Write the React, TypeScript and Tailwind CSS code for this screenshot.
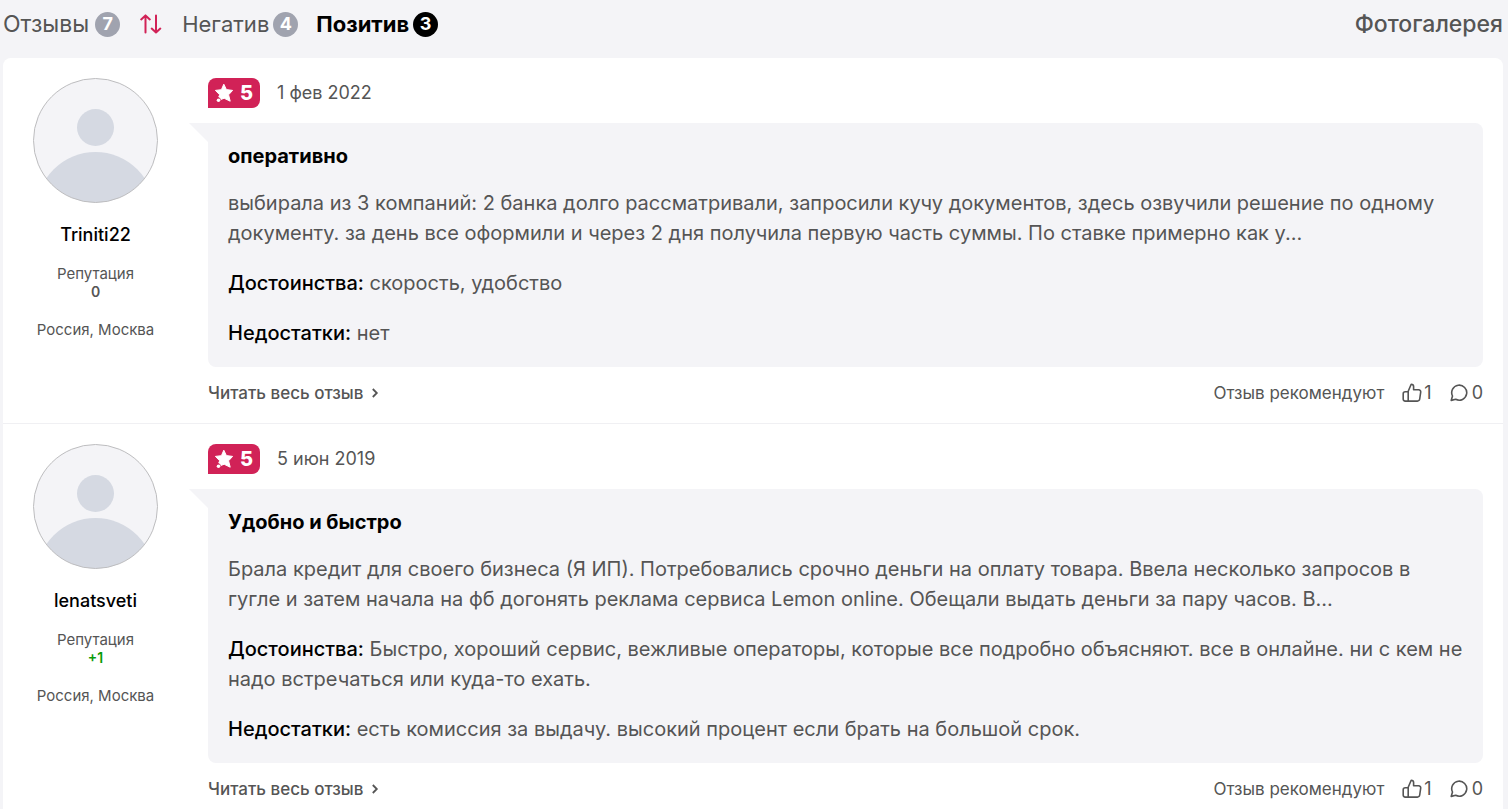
import { ReactNode } from "react";

type Review = {
  author: string;
  reputation: string;
  reputationClass: string;
  place: string;
  rating: number;
  date: string;
  title: string;
  text: ReactNode;
  pros: string;
  cons: string;
  likes: number;
  comments: number;
};

const reviews: Review[] = [
  {
    author: "Triniti22",
    reputation: "0",
    reputationClass: "text-[#555555]",
    place: "Россия, Москва",
    rating: 5,
    date: "1 фев 2022",
    title: "оперативно",
    text: (
      <>
        выбирала из 3 компаний: 2 банка долго рассматривали, запросили кучу документов, здесь озвучили решение по одному
        <br />
        документу. за день все оформили и через 2 дня получила первую часть суммы. По ставке примерно как у...
      </>
    ),
    pros: "скорость, удобство",
    cons: "нет",
    likes: 1,
    comments: 0,
  },
  {
    author: "lenatsveti",
    reputation: "+1",
    reputationClass: "text-[#0a9b0a]",
    place: "Россия, Москва",
    rating: 5,
    date: "5 июн 2019",
    title: "Удобно и быстро",
    text: (
      <>
        Брала кредит для своего бизнеса (Я ИП). Потребовались срочно деньги на оплату товара. Ввела несколько запросов в
        <br />
        гугле и затем начала на фб догонять реклама сервиса Lemon online. Обещали выдать деньги за пару часов. В...
      </>
    ),
    pros: "Быстро, хороший сервис, вежливые операторы, которые все подробно объясняют. все в онлайне. ни с кем не надо встречаться или куда-то ехать.",
    cons: "есть комиссия за выдачу. высокий процент если брать на большой срок.",
    likes: 1,
    comments: 0,
  },
];

function SortIcon() {
  return (
    <svg width="22" height="20" viewBox="0 0 22 20" fill="none" stroke="#d12257" strokeWidth="2" strokeLinecap="round" strokeLinejoin="round" aria-hidden="true">
      <path d="M5.5 18.5V1.5M1.2 5.4l4.3-4 4.3 4M16 1.5v17M11.7 14.6l4.3 4 4.3-4" />
    </svg>
  );
}

function StarIcon() {
  return (
    <svg width="20" height="20" viewBox="0 0 20 20" aria-hidden="true">
      <path
        fill="#fff"
        stroke="#fff"
        strokeWidth="1"
        strokeLinejoin="round"
        d="M9.8 1.2 12.4 6.6 18.6 7.4 14.6 11.8 16.2 18.2 10.2 15.3 6.9 16.4 4.7 14 5.7 11.8 1.4 7.4 7.4 6.7Z"
      />
      <circle cx="4.5" cy="17.3" r="1.8" fill="#fff" />
      <path d="M3.9 14.2 6.5 15.9" stroke="#d12257" strokeWidth="0.8" />
    </svg>
  );
}

function Avatar() {
  return (
    <svg width="125" height="125" viewBox="0 0 125 125" role="img" aria-label="Аватар">
      <defs>
        <clipPath id="avatar-circle">
          <circle cx="62.5" cy="62.5" r="62" />
        </clipPath>
      </defs>
      <circle cx="62.5" cy="62.5" r="62" fill="#f4f4f7" />
      <g clipPath="url(#avatar-circle)" fill="#d5d9e2">
        <circle cx="62.5" cy="49.5" r="18.5" />
        <circle cx="62.5" cy="133" r="59" />
      </g>
      <circle cx="62.5" cy="62.5" r="62" fill="none" stroke="#bdbdbf" strokeWidth="1" />
    </svg>
  );
}

function ThumbIcon() {
  return (
    <svg width="20" height="20" viewBox="0 0 20 20" fill="none" stroke="#555" strokeWidth="1.6" strokeLinejoin="round" strokeLinecap="round" aria-hidden="true">
      <path d="M6.2 8.2 9.2 1.2c1.5 0 2.4.9 2.4 2.4v3.2h5c1.4 0 2.3 1.1 2.1 2.4l-1 6.8c-.2 1.3-1 2.1-2.3 2.1H6.2Z" />
      <path d="M6.2 8.8H3.3c-1.3 0-2.1.8-2.1 2v5.3c0 1.2.8 2 2.1 2h2.9" />
    </svg>
  );
}

function CommentIcon() {
  return (
    <svg width="18" height="18" viewBox="0 0 18 18" fill="none" stroke="#555" strokeWidth="1.6" strokeLinejoin="round" strokeLinecap="round" aria-hidden="true">
      <path d="M1.2 16.4 2.5 12a7.5 7.5 0 1 1 3.2 3.3Z" />
    </svg>
  );
}

function Counter({ value, active }: { value: number; active?: boolean }) {
  return (
    <span
      className={`flex size-[25px] items-center justify-center rounded-full text-lg font-bold leading-none text-white ${
        active ? "bg-black" : "bg-[#a0a3af]"
      }`}
    >
      {value}
    </span>
  );
}

function ReviewCard({ review }: { review: Review }) {
  return (
    <article className="flex gap-5 border-b border-[#f0f0f3] pt-5 pr-5">
      <aside className="flex w-[185px] shrink-0 flex-col items-center text-center text-[15px] leading-[18px]">
        <Avatar />
        <a href="#author" className="mt-5 text-lg leading-6 font-medium text-black">
          {review.author}
        </a>
        <p className="mt-[18px]">Репутация</p>
        <p className={`text-sm leading-[18px] font-semibold ${review.reputationClass}`}>{review.reputation}</p>
        <p className="mt-5">{review.place}</p>
      </aside>
      <div className="min-w-0 flex-1">
        <div className="flex items-center gap-[17px]">
          <span className="flex h-[30px] w-[52px] items-center gap-1.5 rounded-lg rounded-bl-none bg-[#d12257] pl-1.5 text-xl leading-none font-extrabold text-white">
            <StarIcon />
            {review.rating}
          </span>
          <time className="text-lg leading-6">{review.date}</time>
        </div>
        <div className="relative mt-[15px] rounded-lg rounded-tl-none bg-[#f4f4f7] px-5 pt-[18px] pb-[19px] text-xl leading-[30px]">
          <svg className="absolute top-0 right-full" width="19" height="19" viewBox="0 0 19 19" aria-hidden="true">
            <path d="M0 0H19V19Z" fill="#f4f4f7" />
          </svg>
          <h3 className="font-bold text-black">{review.title}</h3>
          <p className="mt-[17px]">{review.text}</p>
          <p className="mt-5">
            <b className="font-medium text-black">Достоинства:</b> {review.pros}
          </p>
          <p className="mt-5">
            <b className="font-medium text-black">Недостатки:</b> {review.cons}
          </p>
        </div>
        <footer className="flex items-center justify-between pt-[11px] pb-[15px] text-[17px] leading-[30px]">
          <a href="#review" className="flex items-center gap-2 font-medium">
            Читать весь отзыв
            <svg width="8" height="10" viewBox="0 0 8 10" fill="none" stroke="#555" strokeWidth="1.8" aria-hidden="true">
              <path d="M1.8 1 5.8 5 1.8 9" />
            </svg>
          </a>
          <div className="flex items-center gap-[18px]">
            <span>Отзыв рекомендуют</span>
            <button type="button" aria-label="Рекомендую" className="flex items-center gap-0.5 text-lg leading-[30px]">
              <ThumbIcon />
              {review.likes}
            </button>
            <a href="#comments" className="flex items-center gap-1 text-lg leading-[30px]">
              <CommentIcon />
              {review.comments}
            </a>
          </div>
        </footer>
      </div>
    </article>
  );
}

export default function App() {
  return (
    <div className="min-h-screen bg-[#f4f4f7] pr-[5px] pl-[3px] font-['Inter','Noto_Sans',sans-serif] text-[#555555]">
      <nav className="flex h-[58px] items-center justify-between pb-[10px] text-[22px] leading-[30px]">
        <div className="flex items-center">
          <a href="#all" className="flex items-center gap-1.5 text-[23px]">
            Отзывы <Counter value={7} />
          </a>
          <button type="button" aria-label="Сортировка" className="mx-5">
            <SortIcon />
          </button>
          <a href="#negative" className="flex items-center gap-1">
            Негатив <Counter value={4} />
          </a>
          <a href="#positive" className="ml-[18px] flex items-center gap-1 font-bold text-black">
            Позитив <Counter value={3} active />
          </a>
        </div>
        <a href="#gallery" className="text-[23px] font-medium">Фотогалерея</a>
      </nav>
      <main className="rounded-t-lg bg-white">
        {reviews.map((review) => (
          <ReviewCard key={review.author} review={review} />
        ))}
      </main>
    </div>
  );
}
